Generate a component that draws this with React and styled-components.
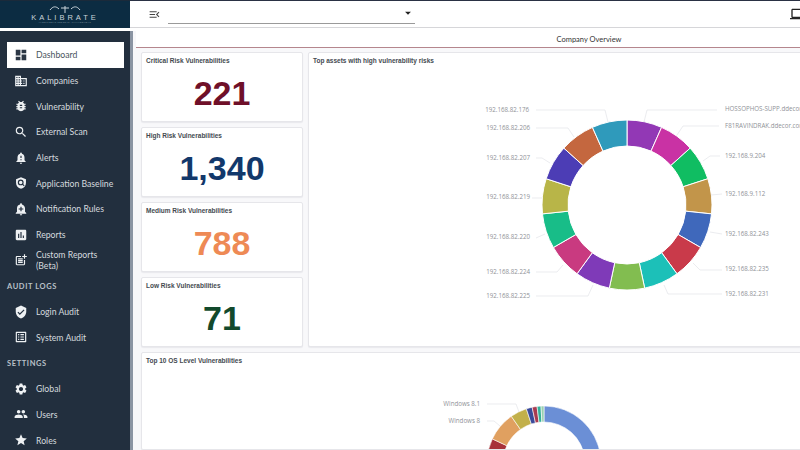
import React from "react";
import styled, { createGlobalStyle } from "styled-components";
import {
  MdDashboard,
  MdOutlineDomain,
  MdBugReport,
  MdSearch,
  MdNotificationImportant,
  MdAddAlert,
  MdAssessment,
  MdPostAdd,
  MdVerifiedUser,
  MdOutlineListAlt,
  MdSettings,
  MdPeople,
  MdStar,
  MdMenuOpen,
  MdArrowDropDown,
  MdOutlineLaptop,
} from "react-icons/md";

const GlobalStyle = createGlobalStyle`
  html, body {
    margin: 0;
    padding: 0;
    width: 800px;
    height: 450px;
    overflow: hidden;
    background: #fff;
    font-family: "Lato", "Liberation Sans", sans-serif;
  }
`;

// shield with a magnifier ring, the icon set has no such glyph
function BaselineIcon({ size }) {
  return (
    <svg width={size} height={size} viewBox="0 0 24 24">
      <path d="M12 2l8.5 3.5v6c0 5.2-3.6 9.2-8.5 10.5-4.9-1.300-8.500-5.300-8.500-10.500v-6z" fill="currentColor" />
      <circle cx="11.500" cy="11" r="4" fill="none" stroke="#222f3e" strokeWidth="2" />
      <path d="M14.500 14l3 3" stroke="#222f3e" strokeWidth="2" />
    </svg>
  );
}

const menu = [
  { label: "Dashboard", icon: MdDashboard, active: true },
  { label: "Companies", icon: MdOutlineDomain },
  { label: "Vulnerability", icon: MdBugReport },
  { label: "External Scan", icon: MdSearch },
  { label: "Alerts", icon: MdNotificationImportant },
  { label: "Application Baseline", icon: BaselineIcon },
  { label: "Notification Rules", icon: MdAddAlert },
  { label: "Reports", icon: MdAssessment },
  { label: "Custom Reports\n(Beta)", icon: MdPostAdd },
  { section: "AUDIT LOGS" },
  { label: "Login Audit", icon: MdVerifiedUser },
  { label: "System Audit", icon: MdOutlineListAlt },
  { section: "SETTINGS" },
  { label: "Global", icon: MdSettings },
  { label: "Users", icon: MdPeople },
  { label: "Roles", icon: MdStar },
];

const stats = [
  { title: "Critical Risk Vulnerabilities", value: "221", color: "#6f1029" },
  { title: "High Risk Vulnerabilities", value: "1,340", color: "#12386b" },
  { title: "Medium Risk Vulnerabilities", value: "788", color: "#ee8a55" },
  { title: "Low Risk Vulnerabilities", value: "71", color: "#12492c" },
];

const assetColors = [
  "#9238b5", "#c932a4", "#10bd62", "#c2954a", "#3f68bb",
  "#c93a4a", "#1cc0b8", "#82bd50", "#7f3ab8", "#c93a80",
  "#18bd88", "#b8b548", "#4c3db5", "#c4673f", "#2f9abb",
];

const assetLabels = [
  { text: "HOSSOPHOS-SUPP.ddecor.com", x: 725, y: 109, line: "717,110 647,110 644,122" },
  { text: "F81RAVINDRAK.ddecor.com", x: 725, y: 126, line: "719,126 683,126 677,135" },
  { text: "192.168.9.204", x: 725, y: 156, line: "720,156 710,156 703,161" },
  { text: "192.168.9.112", x: 725, y: 194, line: "722,194 711,195" },
  { text: "192.168.82.243", x: 725, y: 234, line: "722,234 710,232" },
  { text: "192.168.82.235", x: 725, y: 269, line: "722,270 700,270 693,263" },
  { text: "192.168.82.231", x: 725, y: 294, line: "722,294 668,294 664,285" },
  { text: "192.168.82.176", x: 529, y: 110, end: true, line: "536,110 605,110 608,122" },
  { text: "192.168.82.206", x: 530, y: 128, end: true, line: "536,128 568,128 574,137" },
  { text: "192.168.82.207", x: 530, y: 158, end: true, line: "536,158 542,158 550,163" },
  { text: "192.168.82.219", x: 530, y: 197, end: true, line: "532,198 542,198" },
  { text: "192.168.82.220", x: 530, y: 237, end: true, line: "536,238 545,234" },
  { text: "192.168.82.224", x: 530, y: 272, end: true, line: "536,272 557,272 563,265" },
  { text: "192.168.82.225", x: 530, y: 296, end: true, line: "536,296 588,296 593,285" },
];

const osSlices = [
  { from: 0, to: 250, color: "#6b8fd6" },
  { from: 250, to: 295, color: "#a8323a" },
  { from: 295, to: 325, color: "#e0a060" },
  { from: 325, to: 342, color: "#c2b04a" },
  { from: 342, to: 348, color: "#3a4a9a" },
  { from: 348, to: 353, color: "#a83a50" },
  { from: 353, to: 357, color: "#35b09a" },
  { from: 357, to: 360, color: "#9ad0b0" },
];

const polar = (cx, cy, r, deg) => {
  const a = ((deg - 90) * Math.PI) / 180;
  return [cx + r * Math.cos(a), cy + r * Math.sin(a)];
};

const slicePath = (cx, cy, outer, inner, from, to) => {
  const [x1, y1] = polar(cx, cy, outer, from);
  const [x2, y2] = polar(cx, cy, outer, to);
  const [x3, y3] = polar(cx, cy, inner, to);
  const [x4, y4] = polar(cx, cy, inner, from);
  const large = to - from > 180 ? 1 : 0;
  return `M${x1} ${y1}A${outer} ${outer} 0 ${large} 1 ${x2} ${y2}L${x3} ${y3}A${inner} ${inner} 0 ${large} 0 ${x4} ${y4}Z`;
};

const Page = styled.div`
  width: 800px;
  height: 450px;
  overflow: hidden;
  display: grid;
  grid-template-columns: 130px 1fr;
  grid-template-rows: 28px 1fr;
`;

const Brand = styled.div`
  background: #0c2c42;
  border-top: 1px solid #1b2a3a;
  box-sizing: border-box;
  display: flex;
  flex-direction: column;
  align-items: center;
  justify-content: center;
  color: #c9d3da;
`;

const BrandName = styled.div`
  font-family: "Liberation Sans", sans-serif;
  font-size: 7.5px;
  line-height: 7px;
  letter-spacing: 3px;
  margin-top: 1px;
`;

const BrandTag = styled.div`
  font-size: 2px;
  line-height: 3px;
  letter-spacing: 0.5px;
  color: #8fa2b0;
`;

const TopBar = styled.div`
  background: #fff;
  border-top: 1px solid #2a3144;
  border-bottom: 1px solid #d6d6d9;
  box-sizing: border-box;
  padding-left: 18px;
  display: flex;
  align-items: center;
  color: #444;
`;

const SelectBox = styled.div`
  width: 247px;
  height: 20px;
  margin: -2px 0 0 7px;
  border-bottom: 1px solid #9a9a9a;
  display: flex;
  justify-content: flex-end;
  align-items: center;
  color: #222;
`;

const DeviceIcon = styled.div`
  margin-left: auto;
  margin-right: -6px;
  display: flex;
  color: #222;
`;

const Sidebar = styled.nav`
  margin-top: 3px;
  background: #222f3e;
  padding-top: 11px;
  box-sizing: border-box;
  overflow: hidden;
`;

const NavItem = styled.div`
  height: 25.7px;
  margin: 0 6px 0 7px;
  padding-left: 7px;
  display: flex;
  align-items: center;
  gap: 8px;
  font-size: 8.7px;
  line-height: 11px;
  white-space: pre-line;
  color: ${(p) => (p.$active ? "#4a5560" : "#d5dade")};
  background: ${(p) => (p.$active ? "#fff" : "transparent")};
  svg {
    flex: none;
    color: ${(p) => (p.$active ? "#2b3644" : "#eef1f3")};
  }
`;

const NavSection = styled.div`
  height: 25.7px;
  padding-left: 7px;
  display: flex;
  align-items: center;
  font-size: 7.5px;
  letter-spacing: 0.6px;
  font-weight: 700;
  color: #b9c1c8;
`;

const Main = styled.main`
  border-left: 3px solid #8b95a3;
  margin-top: 3px;
  background: #f8f8fa;
  padding: 0 0 0 3px;
  display: flex;
  flex-direction: column;
  overflow: hidden;
`;

const PageTitle = styled.div`
  height: 16px;
  background: #fff;
  border-bottom: 1px solid #b5868d;
  display: flex;
  align-items: center;
  justify-content: center;
  font-size: 7.5px;
  color: #333;
  padding-left: 242px;
`;

const Overview = styled.div`
  margin: 4px 0 0 5px;
  display: grid;
  grid-template-columns: 162px 1fr;
  column-gap: 5px;
  height: 295px;
`;

const StatColumn = styled.div`
  display: grid;
  grid-template-rows: repeat(4, 1fr);
  row-gap: 5px;
`;

const Panel = styled.section`
  background: #fff;
  border: 1px solid #e6e6ea;
  border-radius: 2px;
  box-sizing: border-box;
  box-shadow: 0 1px 1px rgba(60, 60, 90, 0.08);
  overflow: hidden;
  position: relative;
`;

const PanelTitle = styled.h3`
  margin: 0;
  padding: 3px 4px 0;
  font-family: "Liberation Sans", sans-serif;
  font-size: 6.5px;
  line-height: 9px;
  font-weight: 700;
  color: #444a50;
`;

const StatValue = styled.div`
  text-align: center;
  margin-top: 9px;
  font-family: "Liberation Sans", sans-serif;
  font-weight: 700;
  font-size: 34px;
  line-height: 38px;
  color: ${(p) => p.$color};
`;

const ChartPanel = styled(Panel)`
  margin-right: -2px;
`;

const ChartSvg = styled.svg`
  position: absolute;
  left: 0;
  top: 0;
  display: block;
`;

const BottomPanel = styled(Panel)`
  margin: 5px -2px 0 5px;
  flex: 1;
`;

const ChartLabel = styled.text`
  font-family: "Open Sans", "Liberation Sans", sans-serif;
  font-size: 6.2px;
  fill: #8f9297;
`;

function StatCard({ title, value, color }) {
  return (
    <Panel>
      <PanelTitle>{title}</PanelTitle>
      <StatValue $color={color}>{value}</StatValue>
    </Panel>
  );
}

function AssetsChart() {
  return (
    <ChartSvg width="493" height="295" viewBox="309 53 493 295">
      {assetColors.map((color, i) => (
        <path
          key={color}
          d={slicePath(627, 205, 85, 59, i * 24, (i + 1) * 24)}
          fill={color}
          stroke="#fff"
          strokeWidth="1"
        />
      ))}
      {assetLabels.map((l) => (
        <g key={l.text}>
          <polyline points={l.line} fill="none" stroke="#e2e4e8" strokeWidth="0.7" />
          <ChartLabel x={l.x} y={l.y + 2} textAnchor={l.end ? "end" : "start"}>
            {l.text}
          </ChartLabel>
        </g>
      ))}
    </ChartSvg>
  );
}

function OsChart() {
  return (
    <ChartSvg width="660" height="98" viewBox="142 353 660 98">
      {osSlices.map((s) => (
        <path
          key={s.from}
          d={slicePath(544, 463, 57, 41, s.from, s.to)}
          fill={s.color}
          stroke="#fff"
          strokeWidth="0.6"
        />
      ))}
      <polyline points="487,404 516,404 519,412" fill="none" stroke="#e2e4e8" strokeWidth="0.7" />
      <polyline points="487,421 494,421 500,426" fill="none" stroke="#e2e4e8" strokeWidth="0.7" />
      <ChartLabel x="480" y="406" textAnchor="end">Windows 8.1</ChartLabel>
      <ChartLabel x="480" y="423" textAnchor="end">Windows 8</ChartLabel>
    </ChartSvg>
  );
}

export default function App() {
  return (
    <Page>
      <GlobalStyle />
      <Brand>
        <svg width="34" height="8" viewBox="0 0 34 8">
          <path d="M2 5c3-4 6-4 9-1M32 5c-3-4-6-4-9-1M17 1v7M13 3h8" fill="none" stroke="#c9d3da" strokeWidth="1" />
        </svg>
        <BrandName>KALIBRATE</BrandName>
        <BrandTag>INTELLIGENT SECURITY MANAGEMENT</BrandTag>
      </Brand>
      <TopBar>
        <MdMenuOpen size={13} />
        <SelectBox>
          <MdArrowDropDown size={14} />
        </SelectBox>
        <DeviceIcon>
          <MdOutlineLaptop size={16} />
        </DeviceIcon>
      </TopBar>
      <Sidebar>
        {menu.map((item) =>
          item.section ? (
            <NavSection key={item.section}>{item.section}</NavSection>
          ) : (
            <NavItem key={item.label} $active={item.active}>
              <item.icon size={14} />
              <span>{item.label}</span>
            </NavItem>
          )
        )}
      </Sidebar>
      <Main>
        <PageTitle>Company Overview</PageTitle>
        <Overview>
          <StatColumn>
            {stats.map((s) => (
              <StatCard key={s.title} {...s} />
            ))}
          </StatColumn>
          <ChartPanel>
            <AssetsChart />
            <PanelTitle>Top assets with high vulnerability risks</PanelTitle>
          </ChartPanel>
        </Overview>
        <BottomPanel>
          <OsChart />
          <PanelTitle>Top 10 OS Level Vulnerabilities</PanelTitle>
        </BottomPanel>
      </Main>
    </Page>
  );
}
